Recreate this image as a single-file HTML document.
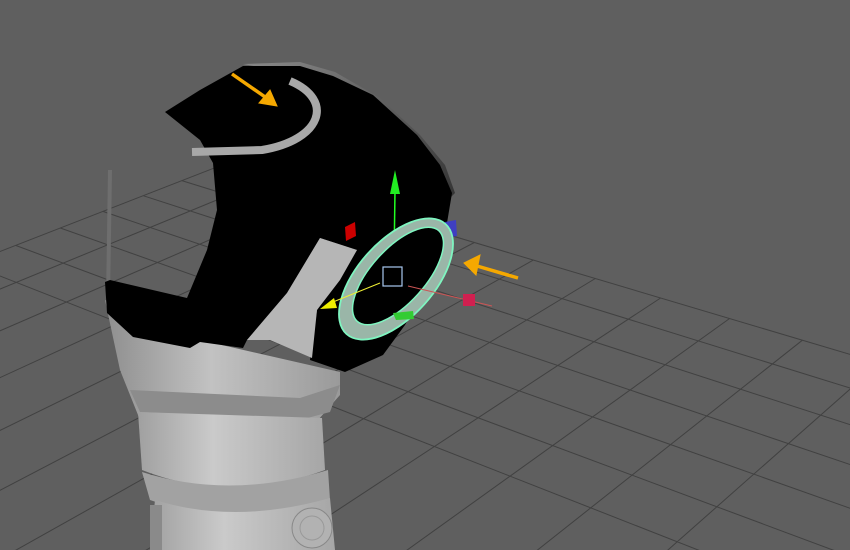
<!DOCTYPE html>
<html><head><style>html,body{margin:0;padding:0;background:#5f5f5f;overflow:hidden;width:850px;height:550px}svg{display:block}</style></head><body>
<svg id="s" width="850" height="550" viewBox="0 0 850 550" xmlns="http://www.w3.org/2000/svg">
<defs>
<linearGradient id="bd" x1="0" y1="0" x2="1" y2="0"><stop offset="0" stop-color="#8e8e8e"/><stop offset="0.45" stop-color="#c2c2c2"/><stop offset="1" stop-color="#9a9a9a"/></linearGradient>
<linearGradient id="bl" x1="0" y1="0" x2="1" y2="0"><stop offset="0" stop-color="#a0a0a0"/><stop offset="0.4" stop-color="#cacaca"/><stop offset="1" stop-color="#a6a6a6"/></linearGradient>
<linearGradient id="rim" x1="0" y1="0" x2="1" y2="1"><stop offset="0" stop-color="#888"/><stop offset="1" stop-color="#333"/></linearGradient>
</defs>
<rect width="850" height="550" fill="#5f5f5f"/>
<g id="grid" stroke="#414141" stroke-width="1" fill="none"></g>
<!-- left shell sliver -->
<path d="M108,170 L112,170 L110,300 L106,300 Z" fill="#6e6e6e"/>
<!-- torso -->
<path d="M105,300 L200,340 L340,372 L340,395 L318,420 L140,420 L120,370 Z" fill="url(#bd)"/>
<path d="M130,390 L300,398 L340,385 L330,412 L300,420 L140,412 Z" fill="#8c8c8c"/>
<path d="M138,412 L322,418 L325,470 Q230,505 142,470 Z" fill="url(#bl)"/>
<path d="M142,472 Q230,500 328,470 L330,500 Q235,530 150,500 Z" fill="#a2a2a2"/>
<path d="M155,500 Q235,525 330,498 L335,550 L150,550 Z" fill="url(#bl)"/>
<path d="M150,505 L162,505 L162,550 L150,550 Z" fill="#8a8a8a"/>
<circle cx="312" cy="528" r="20" fill="#b2b2b2" stroke="#888" stroke-width="1"/>
<circle cx="312" cy="528" r="12" fill="none" stroke="#999" stroke-width="1"/>
<!-- helmet rim -->
<path d="M243,64 L300,62 L335,72 L380,98 L420,135 L445,165 L455,193 L448,200 L430,170 L400,138 L360,100 L330,80 Z" fill="url(#rim)"/>
<!-- black helmet -->
<path d="M165,112 L200,90 L243,66 L300,66 L333,76 L373,95 L417,135 L440,165 L452,193 L445,235 L430,280 L405,325 L383,355 L345,372 L310,360 L317,310 L357,250 L320,238 L287,293 L247,340 L243,348 L200,342 L190,348 L133,337 L107,313 L105,282 L110,280 L187,298 L207,250 L217,210 L213,163 L200,140 Z" fill="#000"/>
<!-- gray patch -->
<path d="M320,238 L357,250 L340,280 L317,310 L312,358 L270,340 L247,340 L287,293 Z" fill="#b6b6b6"/>
<!-- arc -->
<path d="M290,81 C335,100 322,140 262,150 L192,152" fill="none" stroke="#a8a8a8" stroke-width="8"/>
<!-- gizmo -->
<line x1="395" y1="190" x2="394" y2="262" stroke="#2f2" stroke-width="1.5"/>
<path d="M390,194 L395,170 L400,194 Z" fill="#22ee22"/>
<path d="M345,227 L355,222 L356,236 L346,241 Z" fill="#cc0000"/>
<path d="M445,222 L456,220 L457,236 L446,238 Z" fill="#3c3ccc" opacity="0.9"/>
<ellipse cx="396" cy="279" rx="74" ry="38" transform="rotate(-48 396 279)" fill="#9ab6a8" stroke="#7ff5c0" stroke-width="1.8"/>
<ellipse cx="398" cy="276" rx="61" ry="27" transform="rotate(-48 398 276)" fill="#000" stroke="#7ff5c0" stroke-width="1.5"/>
<rect x="383" y="267" width="19" height="19" fill="none" stroke="#a8c8f0" stroke-width="1.2"/>
<line x1="380" y1="283" x2="333" y2="302" stroke="#ee3" stroke-width="1"/>
<path d="M320,309 L334,298 L337,308 Z" fill="#ee0"/>
<line x1="408" y1="286" x2="492" y2="306" stroke="#c55" stroke-width="1"/>
<rect x="463" y="294" width="12" height="12" fill="#d02050"/>
<path d="M393,313 L413,311 L414,319 L396,320 Z" fill="#3c3"/>
<!-- arrows -->
<g stroke="#f5a800" stroke-width="3.5" fill="#f5a800">
<line x1="232" y1="74" x2="268" y2="99"/>
<path d="M277,106 L259,103 L270,90 Z" stroke-width="1"/>
<line x1="518" y1="278" x2="477" y2="266"/>
<path d="M464,263 L480,255 L476,275 Z" stroke-width="1"/>
</g>
</svg>
<script>
(function(){
var VA=[-1850,-450],VB=[1800,-450],O=[630,390],a=-0.03,b=-0.031;
function P(u,v){var w=1+a*u+b*v;return [(O[0]+a*u*VA[0]+b*v*VB[0])/w,(O[1]+a*u*VA[1]+b*v*VB[1])/w];}
var g=document.getElementById('grid'),d='',umin=-9,vmin=-3,umax=30,vmax=30;
for(var u=umin;u<=umax;u++){var p=P(u,vmin),q=P(u,vmax);d+='M'+p[0].toFixed(1)+','+p[1].toFixed(1)+'L'+q[0].toFixed(1)+','+q[1].toFixed(1);}
for(var v=vmin;v<=vmax;v++){var p=P(umin,v),q=P(umax,v);d+='M'+p[0].toFixed(1)+','+p[1].toFixed(1)+'L'+q[0].toFixed(1)+','+q[1].toFixed(1);}
var pa=document.createElementNS('http://www.w3.org/2000/svg','path');pa.setAttribute('d',d);g.appendChild(pa);
})();
</script>
</body></html>
